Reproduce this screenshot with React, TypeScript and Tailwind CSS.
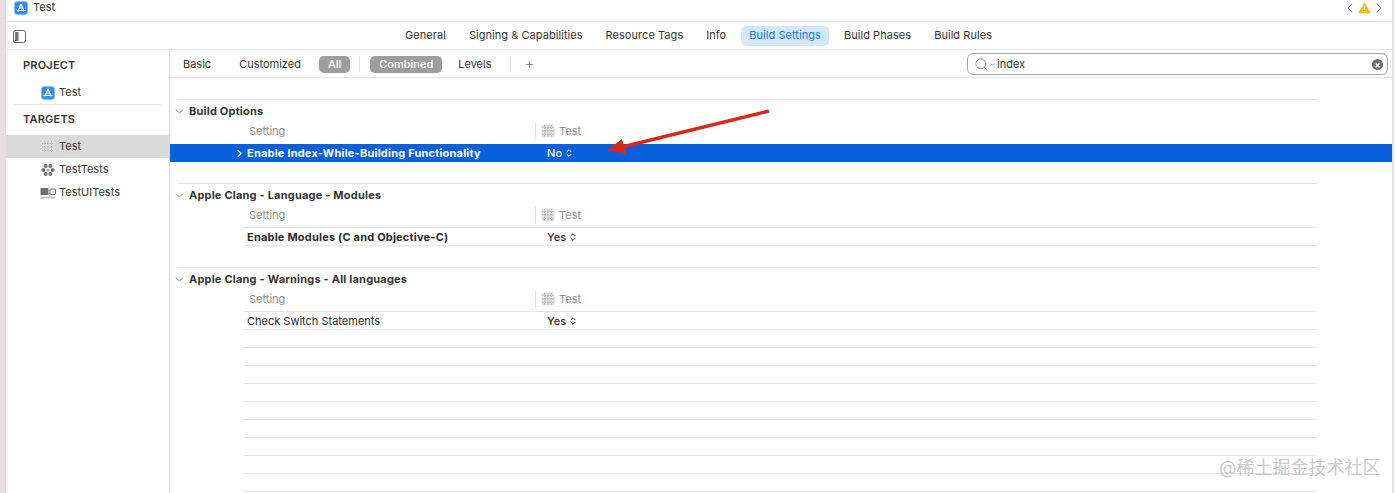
import { ChevronDown, ChevronLeft, ChevronRight, ChevronsUpDown, Plus, Search } from 'lucide-react'

const tabs = ['General', 'Signing & Capabilities', 'Resource Tags', 'Info', 'Build Settings', 'Build Phases', 'Build Rules']

function AppIcon() {
  return (
    <svg width="14" height="14" viewBox="0 0 14 14" className="shrink-0">
      <rect x="0.5" y="0.5" width="13" height="13" rx="2.5" fill="#2f8cf0" stroke="#8fc0f5" />
      <path d="M7 3 L4 10 M7 3 L10 10 M3 9.5 H11 M5.5 7 H8.5" stroke="#fff" strokeWidth="1.2" strokeLinecap="round" fill="none" />
    </svg>
  )
}

function TargetIcon() {
  return (
    <svg width="14" height="14" viewBox="0 0 14 14" className="shrink-0">
      <rect x="0.5" y="0.5" width="13" height="13" rx="2" fill="#e2e2e2" />
      <path d="M1 3.5 H13 M1 7 H13 M1 10.5 H13 M3.5 1 V13 M7 1 V13 M10.5 1 V13" stroke="#a9a9a9" strokeWidth="0.8" strokeDasharray="1.5 1" />
    </svg>
  )
}

function BundleIcon() {
  return (
    <svg width="14" height="14" viewBox="0 0 14 14" className="shrink-0" fill="#6f7472">
      <circle cx="4.7" cy="3" r="2" />
      <circle cx="9.3" cy="3" r="2" />
      <circle cx="2.3" cy="7" r="2" />
      <circle cx="11.7" cy="7" r="2" />
      <circle cx="4.7" cy="11" r="2" />
      <circle cx="9.3" cy="11" r="2" />
      <circle cx="7" cy="7" r="1.6" fill="#a9adab" />
    </svg>
  )
}

function UiIcon() {
  return (
    <svg width="16" height="14" viewBox="0 0 16 14" className="-ml-[1px] shrink-0">
      <rect x="0.5" y="2" width="8" height="7" fill="#6d7170" />
      <rect x="10" y="3" width="5.5" height="5.5" rx="0.5" fill="#fff" stroke="#6d7170" />
      <path d="M1 11.5 H15" stroke="#b5b8b7" strokeWidth="1.5" />
    </svg>
  )
}

function Pill({ children }: { children: string }) {
  return <span className="flex h-[17px] items-center rounded-[5px] bg-[#9d9d9d] px-[9px] font-medium text-white">{children}</span>
}

function SidebarItem({ icon, label, selected }: { icon: React.ReactNode; label: string; selected?: boolean }) {
  return (
    <div className={`flex h-[23px] items-center pl-[35px] ${selected ? 'bg-[#d9d9d9]' : ''}`}>
      <span className="flex w-[18px] shrink-0 items-center">{icon}</span>
      <span className="text-[#333]">{label}</span>
    </div>
  )
}

function Value({ text, light }: { text: string; light?: boolean }) {
  return (
    <span className={`flex items-center gap-[2px] font-medium ${light ? 'font-bold text-white' : 'text-[#2b2b2b]'}`}>
      {text}
      <ChevronsUpDown size={10} strokeWidth={2.4} />
    </span>
  )
}

function Section({ title, name, value, bold, selected }: { title: string; name: string; value: string; bold?: boolean; selected?: boolean }) {
  return (
    <section>
      <div className="mr-[75px] ml-[8px] border-t border-[#e2e2e2]">
        <div className="flex h-[22px] items-center">
          <ChevronDown size={13} strokeWidth={1.5} className="ml-[-5px] text-[#707070]" />
          <h2 className="ml-[3px] font-bold tracking-[0.2px] text-[#333]">{title}</h2>
        </div>
      </div>
      <div className="mr-[75px] ml-[74px] flex h-[22px] pb-[4px] text-[#8e8e8e]">
        <span className="flex w-[291px] items-center pl-[5px]">Setting</span>
        <span className="flex items-center gap-[4px] border-l border-[#e2e2e2] pl-[5px]">
          <TargetIcon />
          Test
        </span>
      </div>
      {selected ? (
        <div className="flex h-[18px] items-center bg-[#0861da] pl-[63px] font-bold tracking-[0.2px] text-white">
          <ChevronRight size={13} strokeWidth={2} />
          <span className="ml-[1px] w-[300px]">{name}</span>
          <Value text={value} light />
        </div>
      ) : (
        <div className="-mt-[1px] mr-[75px] ml-[74px] flex h-[19px] items-center border-y border-[#e4e4e4] pt-[1px] pl-[3px] text-[#2b2b2b]">
          <span className={`w-[300px] ${bold ? 'font-bold tracking-[0.2px]' : ''}`}>{name}</span>
          <Value text={value} />
        </div>
      )}
      <div className="h-[21px]" />
    </section>
  )
}

export default function App() {
  return (
    <div className="relative flex h-[493px] w-[1396px] overflow-hidden bg-[#fbfbfb] font-['Inter','Noto_Sans_CJK_SC',sans-serif] text-[11px]">
      <div className="w-[6px] shrink-0 bg-[#e9dce3]" />
      <div className="flex h-full w-[1386px] shrink-0 flex-col bg-white">
        <header className="flex h-[22px] shrink-0 items-center border-b border-[#e4e4e4] pr-[5px] pb-[6px] pl-[8px]">
          <AppIcon />
          <span className="ml-[5px] text-[#333]">Test</span>
          <div className="ml-auto flex items-center text-[#808080]">
            <ChevronLeft size={16} strokeWidth={1.1} />
            <svg width="13" height="12" viewBox="0 0 13 12">
              <path d="M6.5 1 L12.2 11 H0.8 Z" fill="#fbb81c" stroke="#fbb81c" strokeLinejoin="round" />
              <path d="M6.5 4 V7.6 M6.5 9 V9.8" stroke="#fff" strokeWidth="1.4" />
            </svg>
            <ChevronRight size={16} strokeWidth={1.1} />
          </div>
        </header>
        <nav className="relative flex h-[28px] shrink-0 items-center gap-[7px] border-b border-[#e4e4e4] pl-[391px] tracking-[0.05px] text-[#333]">
          <svg width="14" height="13" viewBox="0 0 14 13" className="absolute top-[8px] left-[7px]">
            <rect x="0.5" y="0.5" width="12" height="12" rx="2" fill="#fff" stroke="#666" />
            <rect x="2" y="2" width="3.5" height="9" fill="#777" />
          </svg>
          {tabs.map((tab) => (
            <span
              key={tab}
              className={`flex h-[20px] items-center rounded-[5px] px-[8px] ${tab === 'Build Settings' ? 'bg-[#d3e6fb] text-[#1c76e6]' : ''}`}
            >
              {tab}
            </span>
          ))}
        </nav>
        <div className="flex min-h-0 flex-1">
          <aside className="w-[164px] shrink-0 border-r border-[#dcdcdc] text-[11px]">
            <div className="flex h-[31px] items-center pb-[1px] pl-[17px] font-semibold tracking-[0.2px] text-[#333]">PROJECT</div>
            <SidebarItem icon={<AppIcon />} label="Test" />
            <div className="mx-[8px] border-t border-[#e4e4e4]" />
            <div className="flex h-[30px] items-center pb-[2px] pl-[17px] font-semibold tracking-[0.2px] text-[#333]">TARGETS</div>
            <SidebarItem icon={<TargetIcon />} label="Test" selected />
            <SidebarItem icon={<BundleIcon />} label="TestTests" />
            <SidebarItem icon={<UiIcon />} label="TestUITests" />
          </aside>
          <main className="min-w-0 flex-1">
            <div className="flex h-[28px] items-center border-b border-[#e4e4e4] pt-[1px] pl-[13px] text-[#333]">
              <span>Basic</span>
              <span className="ml-[28px]">Customized</span>
              <span className="ml-[18px]"><Pill>All</Pill></span>
              <span className="mr-[10px] ml-[9px] h-[16px] border-l border-[#dcdcdc]" />
              <Pill>Combined</Pill>
              <span className="ml-[16px]">Levels</span>
              <span className="ml-[18px] h-[16px] border-l border-[#dcdcdc]" />
              <Plus size={11} strokeWidth={1.4} className="ml-[13px] text-[#555]" />
              <div className="mr-[4px] ml-auto flex h-[22px] w-[421px] items-center rounded-[6px] border border-[#a5a5a5] pr-[4px] pl-[6px]">
                <Search size={15} strokeWidth={1.1} className="text-[#666]" />
                <ChevronDown size={7} strokeWidth={2} className="text-[#666]" />
                <span className="ml-[1px] text-[#333]">index</span>
                <span className="ml-auto flex h-[11px] w-[11px] items-center justify-center rounded-full bg-[#6f6f6f] text-[9px] leading-none font-bold text-white">×</span>
              </div>
            </div>
            <div className="pt-[21px]">
              <Section title="Build Options" name="Enable Index-While-Building Functionality" value="No" selected />
              <Section title="Apple Clang - Language - Modules" name="Enable Modules (C and Objective-C)" value="Yes" bold />
              <Section title="Apple Clang - Warnings - All languages" name="Check Switch Statements" value="Yes" />
              <div className="-mt-[21px] mr-[75px] ml-[74px]">
                {Array.from({ length: 9 }, (_, i) => (
                  <div key={i} className="h-[18px] border-b border-[#e4e4e4]" />
                ))}
              </div>
            </div>
          </main>
        </div>
      </div>
      <div className="w-[2px] shrink-0 bg-[#e4e1e4]" />
      <svg width="180" height="60" viewBox="0 0 180 60" className="absolute top-[100px] left-[600px]">
        <path d="M169 11 L22 47" stroke="#d9281a" strokeWidth="3.5" />
        <path d="M7 50 L22 39 L26 54 Z" fill="#d9281a" />
      </svg>
      <span className="absolute top-[454px] left-[1219px] text-[18px] text-[#a8a8a8] opacity-60">@稀土掘金技术社区</span>
    </div>
  )
}
